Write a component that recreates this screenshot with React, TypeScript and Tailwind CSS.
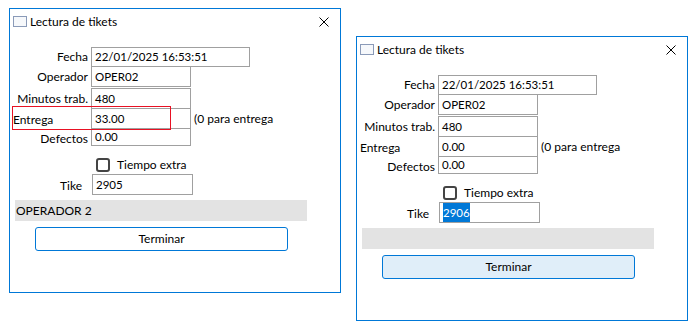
import React from 'react';

type TicketWindowProps = {
  entrega: string;
  tike: string;
  operador: string;
  marked?: boolean;
  tikeSelected?: boolean;
  buttonHover?: boolean;
};

const Field = ({ value, width, height, selected }: { value: string; width: string; height: string; selected?: boolean }) => (
  <div className={`${width} ${height} border border-[#a0a0a0] bg-white flex items-stretch pl-[3px] text-[11.5px] text-black shrink-0`}>
    {selected ? (
      <span className="flex items-center bg-[#0078d7] text-white leading-none">{value}</span>
    ) : (
      <span className="flex items-center leading-none">{value}</span>
    )}
  </div>
);

const TicketWindow = ({ entrega, tike, operador, marked, tikeSelected, buttonHover }: TicketWindowProps) => {
  return (
    <div className="relative w-[332px] h-[285px] border border-[#0078d7] bg-white flex flex-col shrink-0 text-[12px] text-black">
      {/* title bar */}
      <div className="h-[25px] flex items-center pl-[3px] pr-[11px]">
        <div className="w-[14px] h-[11px] border border-[#8a9ab8] bg-[#f6f8fb]" />
        <span className="ml-[3px] leading-none">Lectura de tikets</span>
        <div className="flex-1" />
        <svg width="10" height="10" viewBox="0 0 10 10">
          <path d="M0.5 0.5 L9.5 9.5 M9.5 0.5 L0.5 9.5" stroke="#000" strokeWidth="1" fill="none" />
        </svg>
      </div>

      <div className="mt-[13px] flex flex-col">
        <div className="flex items-center h-[20px]">
          <div className="w-[81px] pr-[3px] text-right">Fecha</div>
          <Field value="22/01/2025 16:53:51" width="w-[159px]" height="h-[20px]" />
        </div>
        <div className="flex items-center h-[21px] -mt-[1px]">
          <div className="w-[81px] pr-[3px] text-right">Operador</div>
          <Field value="OPER02" width="w-[100px]" height="h-[21px]" />
        </div>
        <div className="flex items-center h-[21px] mt-[1px]">
          <div className="w-[81px] pr-[3px] text-right">Minutos trab.</div>
          <Field value="480" width="w-[100px]" height="h-[21px]" />
        </div>
        <div className="flex items-center h-[21px] -mt-[1px]">
          <div className="w-[81px] pl-[3px] pt-[2px]">Entrega</div>
          <Field value={entrega} width="w-[100px]" height="h-[21px]" />
          <span className="ml-[3px]">(0 para entrega</span>
        </div>
        <div className="flex items-center h-[18px] -mt-[1px]">
          <div className="w-[81px] pr-[3px] pt-[3px] text-right">Defectos</div>
          <Field value="0.00" width="w-[100px]" height="h-[18px]" />
        </div>

        <div className="flex items-center h-[14px] mt-[12px] pl-[86px]">
          <div className="w-[14px] h-[14px] border-2 border-[#444] rounded-[3px] bg-white" />
          <span className="ml-[7px]">Tiempo extra</span>
        </div>

        <div className="flex items-center h-[21px] mt-[2px]">
          <div className="w-[82px] pr-[10px] pt-[2px] text-right">Tike</div>
          <Field value={tike} width="w-[101px]" height="h-[21px]" selected={tikeSelected} />
        </div>

        <div className="ml-[5px] mt-[5px] w-[292px] h-[21px] bg-[#e3e3e3] flex items-center pl-[1px]">
          {operador}
        </div>

        <button
          className={`ml-[25px] mt-[6px] w-[253px] h-[24px] border border-[#0078d7] rounded-[3px] flex items-center justify-center ${
            buttonHover ? 'bg-[#e0eef9]' : 'bg-white'
          }`}
        >
          Terminar
        </button>
      </div>

      {marked && (
        <div className="absolute left-[2px] top-[97px] w-[159px] h-[24px] border border-[#e81123] pointer-events-none" />
      )}
    </div>
  );
};

export default function App() {
  return (
    <div className="w-[698px] h-[324px] bg-white flex items-start font-['Lato',sans-serif] overflow-hidden">
      <div className="ml-[9px] mt-[8px]">
        <TicketWindow entrega="33.00" tike="2905" operador="OPERADOR 2" marked />
      </div>
      <div className="ml-[15px] mt-[36px]">
        <TicketWindow entrega="0.00" tike="2906" operador="" tikeSelected buttonHover />
      </div>
    </div>
  );
}
